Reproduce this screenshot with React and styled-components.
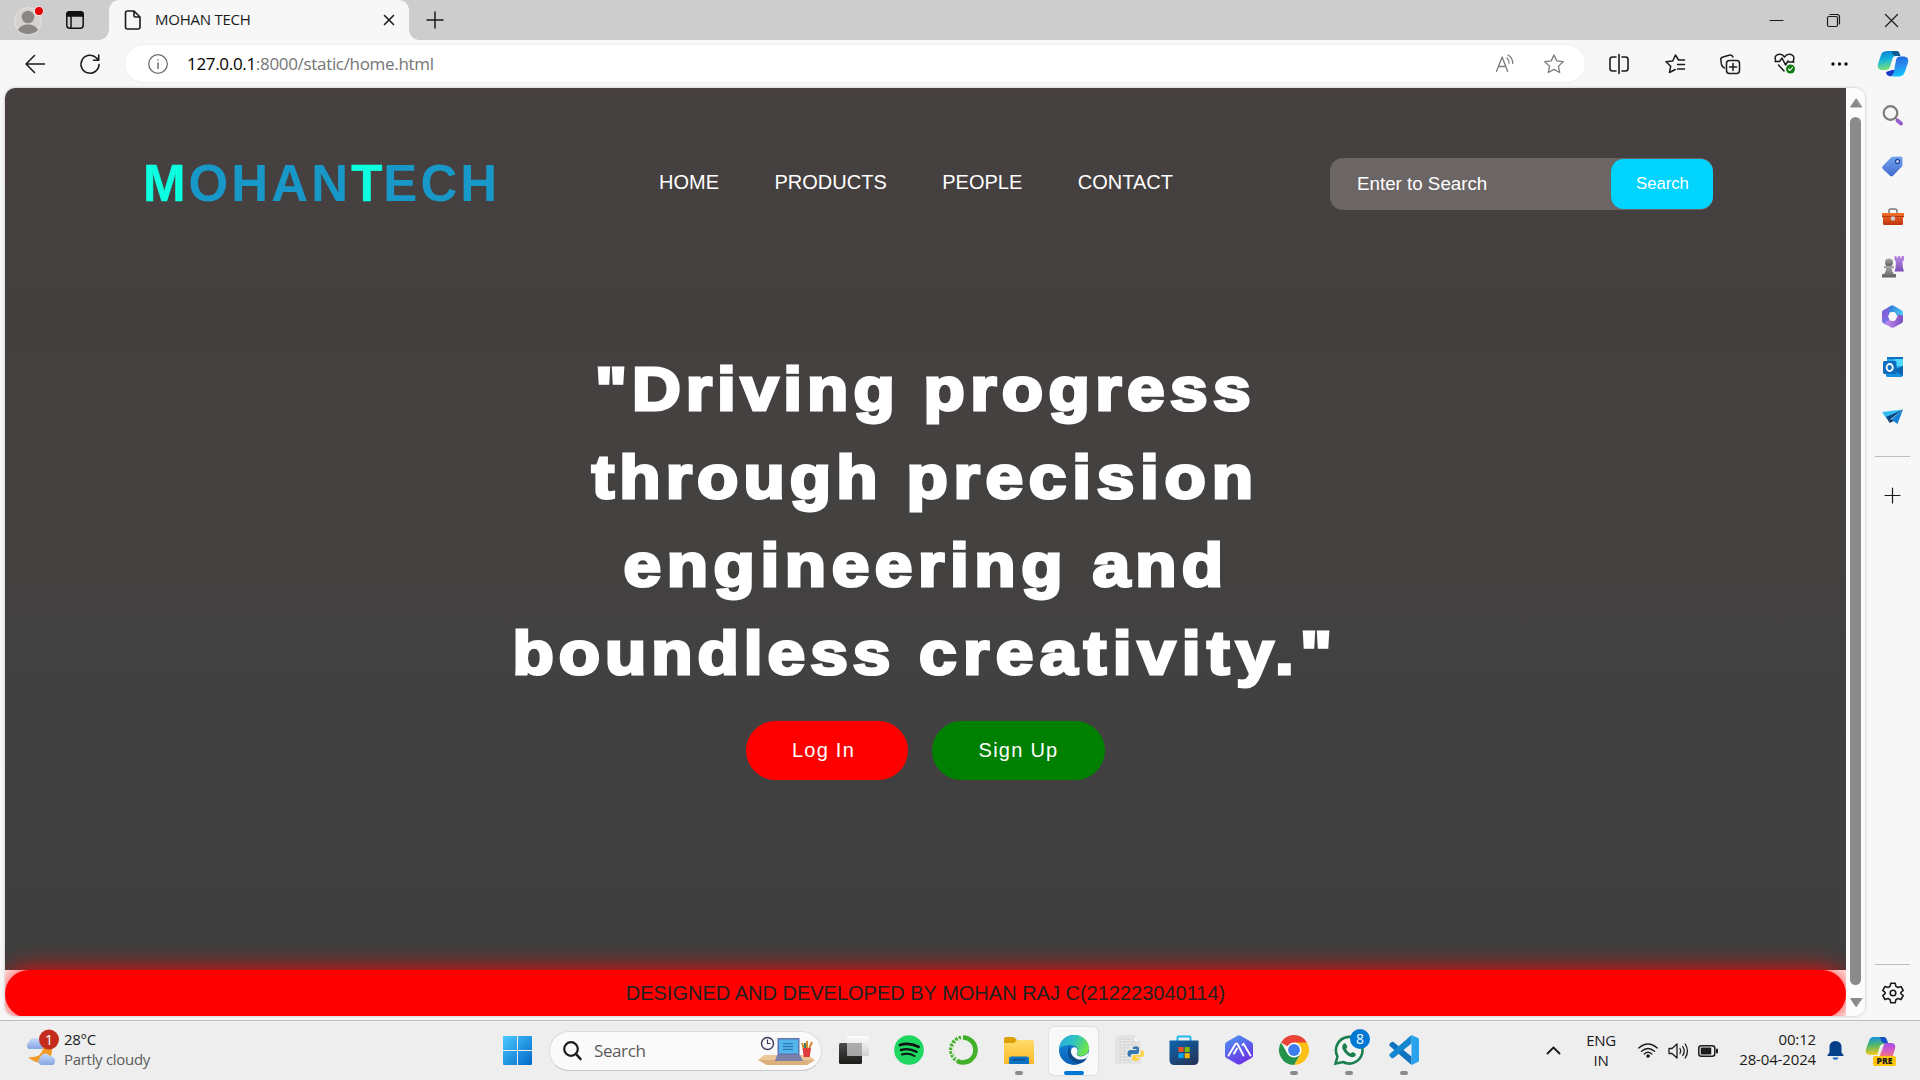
import React from "react";
import styled, { createGlobalStyle } from "styled-components";

const Global = createGlobalStyle`
  * { box-sizing: border-box; }
  body { margin: 0; overflow: hidden; background: #f7f7f7; }
  svg { display: block; overflow: visible; flex: none; }
`;

const ui = `"Open Sans", "Noto Sans", sans-serif`;
const arial = `"Liberation Sans", Arial, sans-serif`;

const Screen = styled.div`
  width: 1920px;
  height: 1080px;
  display: flex;
  flex-direction: column;
  overflow: hidden;
  background: #f7f7f7;
  font-family: ${ui};
`;

/* ---------- browser chrome ---------- */
const TitleBar = styled.div`
  height: 40px;
  display: flex;
  background: #cdcdcd;
`;
const TitleLeft = styled.div`
  width: 109px;
  display: flex;
  align-items: center;
  padding-left: 13px;
  gap: 23px;
`;
const Tab = styled.div`
  width: 300px;
  height: 40px;
  display: flex;
  align-items: center;
  padding: 0 14px 0 15px;
  background: #f7f7f7;
  border-radius: 10px 10px 0 0;
  position: relative;
  &::before, &::after {
    content: "";
    position: absolute;
    bottom: 0;
    width: 10px;
    height: 10px;
  }
  &::before { left: -10px; background: radial-gradient(circle at 0 0, transparent 9.5px, #f7f7f7 10px); }
  &::after { right: -10px; background: radial-gradient(circle at 100% 0, transparent 9.5px, #f7f7f7 10px); }
`;
const TabTitle = styled.span`
  flex: 1;
  margin-left: 13px;
  padding-bottom: 2px;
  font-size: 15px;
  letter-spacing: -0.25px;
  color: #1b1b1b;
  line-height: 20px;
  white-space: nowrap;
`;
const NewTab = styled.div`
  display: flex;
  align-items: center;
  margin-left: 17px;
`;
const WindowButtons = styled.div`
  margin-left: auto;
  display: flex;
`;
const Slot = styled.div`
  width: ${(p) => p.$w}px;
  height: ${(p) => (p.$h ? p.$h + "px" : "auto")};
  display: flex;
  align-items: center;
  justify-content: center;
  flex: none;
`;
const Toolbar = styled.div`
  height: 48px;
  display: flex;
  align-items: center;
  padding-bottom: 1px;
`;
const AddressBar = styled.div`
  width: 1460px;
  height: 37px;
  display: flex;
  align-items: center;
  padding-left: 23px;
  border-radius: 19px;
  background: #fff;
  box-shadow: 0 0 3px rgba(0, 0, 0, 0.07);
`;
const Url = styled.span`
  flex: 1;
  margin-left: 19px;
  font-size: 17px;
  letter-spacing: -0.32px;
  color: #757575;
  white-space: nowrap;
  b { font-weight: 400; color: #000; }
`;

/* ---------- body ---------- */
const Body = styled.div`
  height: 932px;
  display: flex;
  padding-left: 5px;
`;
const Viewport = styled.div`
  width: 1860px;
  height: 928px;
  display: flex;
  border-radius: 10px;
  overflow: hidden;
  background: #fff;
  box-shadow: 0 0 3px rgba(0, 0, 0, 0.25);
`;
const Page = styled.div`
  width: 1841px;
  height: 928px;
  display: flex;
  flex-direction: column;
  overflow: hidden;
  font-family: ${arial};
`;
const Main = styled.main`
  height: 882px;
  flex: none;
  display: flex;
  flex-direction: column;
  background: linear-gradient(#464140 0%, #454040 28%, #434240 50%, #424041 70%, #3e3f3e 100%);
`;
const Header = styled.header`
  height: 192px;
  display: flex;
  align-items: center;
  padding-left: 138px;
`;
const Logo = styled.h1`
  width: 516px;
  margin: 0;
  font-size: 51px;
  font-weight: 700;
  letter-spacing: 3.1px;
  line-height: 60px;
  color: #1898c8;
  span { color: #0cffe1; -webkit-text-stroke: 0.5px #0cffe1; }
  span + span { letter-spacing: 1px; }
`;
const Nav = styled.nav`
  width: 671px;
  display: flex;
  gap: 55.5px;
  padding-bottom: 4px;
`;
const NavLink = styled.a`
  font-size: 20px;
  color: #fff;
`;
const SearchBox = styled.div`
  width: 383px;
  height: 52px;
  display: flex;
  align-items: center;
  padding-left: 27px;
  border-radius: 13px;
  background: #6b6565;
`;
const Placeholder = styled.span`
  flex: 1;
  font-size: 18.75px;
  color: #fff;
`;
const SearchButton = styled.button`
  width: 102px;
  height: 50px;
  border: 0;
  padding: 0 0 0 1px;
  border-radius: 12.5px;
  background: #00d4ff;
  color: #fff;
  font: 16.67px ${arial};
`;
const Hero = styled.section`
  display: flex;
  flex-direction: column;
  align-items: center;
  padding-top: 65px;
`;
const Line = styled.div`
  height: 88px;
  line-height: 88px;
  font-size: 61.5px;
  font-weight: 700;
  color: #fff;
  white-space: pre;
  -webkit-text-stroke: 3px #fff;
  transform: scaleX(1.1);
`;
const Word = styled.span`
  letter-spacing: ${(p) => p.$ls || 4.5}px;
`;
const Actions = styled.div`
  display: flex;
  gap: 24px;
  margin-top: 24px;
`;
const Pill = styled.button`
  width: ${(p) => p.$w}px;
  height: 59px;
  border: 0;
  padding: 0 ${(p) => p.$pr || 0}px 0 0;
  border-radius: 30px;
  background: ${(p) => p.$bg};
  color: #fff;
  font: 20px ${arial};
  letter-spacing: 1.25px;
`;
const Footer = styled.footer`
  height: 48px;
  flex: none;
  display: flex;
  align-items: center;
  justify-content: center;
  padding-bottom: 2px;
  border-radius: 25px;
  background: #f00;
  box-shadow: 0 0 25px #f00;
  color: #212121;
  font-size: 20px;
  position: relative;
`;
const Scrollbar = styled.div`
  width: 19px;
  display: flex;
  flex-direction: column;
  align-items: center;
  padding-top: 10px;
  background: #fcfcfc;
`;
const Thumb = styled.div`
  width: 11px;
  height: 868px;
  margin: 9px 0 13px;
  border-radius: 6px;
  background: #8b8b8b;
`;
const Sidebar = styled.aside`
  width: 55px;
  height: 932px;
  display: flex;
  flex-direction: column;
  align-items: center;
  padding-top: 3px;
`;
const Rule = styled.div`
  width: 35px;
  height: 1px;
  background: #bcbcbc;
  flex: none;
`;
const Spacer = styled.div`
  flex: 1;
`;

/* ---------- taskbar ---------- */
const Taskbar = styled.div`
  height: 60px;
  display: flex;
  align-items: center;
  background: #eee;
  border-top: 1px solid #bdbdbd;
`;
const Weather = styled.div`
  width: 490px;
  display: flex;
  align-items: center;
  padding-left: 25px;
  gap: 5px;
  padding-bottom: 3px;
`;
const Stack = styled.div`
  width: ${(p) => (p.$w ? p.$w + "px" : "auto")};
  display: flex;
  flex-direction: column;
  align-items: ${(p) => p.$align || "flex-start"};
  padding-bottom: ${(p) => p.$pb || 0}px;
  font-size: 15px;
  line-height: 20px;
  letter-spacing: ${(p) => p.$ls || -0.3}px;
  color: #1b1b1b;
  white-space: nowrap;
`;
const Muted = styled.span`
  color: #5c5c5c;
`;
const TaskSearch = styled.div`
  width: 273px;
  height: 40px;
  margin: 0 4px;
  display: flex;
  align-items: center;
  padding: 0 6px 0 13px;
  border: 1px solid #dcdcdc;
  border-bottom-color: #c9c9c9;
  border-radius: 20px;
  background: #fafafa;
`;
const SearchText = styled.span`
  flex: 1;
  margin-left: 12px;
  padding-bottom: 1px;
  font-size: 17px;
  letter-spacing: -0.4px;
  color: #5a5a5a;
`;
const TaskApp = styled.div`
  width: 55px;
  height: 48px;
  display: flex;
  justify-content: center;
  align-items: center;
  padding-bottom: 1px;
  position: relative;
  &::before {
    content: "";
    display: ${(p) => (p.$active ? "block" : "none")};
    position: absolute;
    inset: 0 3px;
    border-radius: 5px;
    background: #f9f9f9;
    box-shadow: 0 0 2px rgba(0, 0, 0, 0.2);
  }
  &::after {
    content: "";
    display: ${(p) => (p.$active || p.$open ? "block" : "none")};
    position: absolute;
    bottom: 0;
    width: ${(p) => (p.$active ? 20 : 8)}px;
    height: 4px;
    border-radius: 2px;
    background: ${(p) => (p.$active ? "#0078d4" : "#8a8a8a")};
  }
  svg { position: relative; }
`;
const Tray = styled.div`
  margin-left: auto;
  width: 391px;
  display: flex;
  align-items: center;
`;

const Svg = ({ w = 20, h, vb, children, c = "#1b1b1b", sw = 1.4 }) => (
  <svg width={w} height={h || w} viewBox={vb || `0 0 ${w} ${h || w}`} fill="none" stroke={c} strokeWidth={sw} strokeLinecap="round" strokeLinejoin="round">
    {children}
  </svg>
);
const Grad = ({ id, a, b, x2 = 0, y2 = 1, mid }) => (
  <linearGradient id={id} x1="0" y1="0" x2={x2} y2={y2}>
    <stop offset="0" stopColor={a} />
    {mid && <stop offset="0.5" stopColor={mid} />}
    <stop offset="1" stopColor={b} />
  </linearGradient>
);

const Avatar = () => (
  <Svg w={30} h={30} c="none">
    <circle cx="15" cy="16" r="13.3" fill="#d5d2cf" stroke="#e6e4e1" strokeWidth="1" />
    <circle cx="15" cy="12" r="6.3" fill="#8b8682" />
    <path d="M5 25c3-7.500 17-7.500 20 0-5 5.500-15 5.500-20 0Z" fill="#8b8682" />
    <circle cx="26" cy="6" r="4.600" fill="#e60000" stroke="#eee" strokeWidth="1" />
  </Svg>
);
const Workspaces = () => (
  <Svg w={18} sw={1.500} c="#111">
    <rect x="0.800" y="0.800" width="16.400" height="16.400" rx="3" />
    <path d="M1 5V3q0-2 2-2h12q2 0 2 2v2Z" fill="#111" />
    <path d="M5 5v12" />
  </Svg>
);
const CopilotIcon = () => (
  <svg width="30" height="27" viewBox="0 0 30 27">
    <defs>
      <Grad id="cpa" a="#0a7bd0" mid="#15b4dc" b="#7be07a" x2={0.2} />
      <Grad id="cpb" a="#1c62dc" mid="#2b86ec" b="#0fc0fb" x2={0.2} />
    </defs>
    <path d="M14 20h5l-4 4.500c-1 1.500-2 2-4 1.500-2-.3-2.500-2-3-4Z" fill="#163cc8" />
    <path d="M10 1h8c3 0 3.500 2.500 4 5h-4c-2 0-3 1-3.600 3L12 17c-.7 2-2 3-4 3H5c-4 0-6-2-5-6L3 5c.8-3 3-4 7-4Z" fill="url(#cpa)" />
    <path d="M14 1h4.500c2.500 0 3 2 4 5h-4.300C16 6 14 5 14 1Z" fill="#0b5b95" />
    <path d="M22 6.500h3c4 0 6 2 5 6l-3 9c-1 3-3 5-7 5h-8c2 0 3-1 3.600-3L18 10c.7-2.500 2-3.500 4-3.500Z" fill="url(#cpb)" />
  </svg>
);
const ChessIcon = () => (
  <svg width="22" height="24" viewBox="0 0 22 24">
    <defs><Grad id="cha" a="#aaa" b="#606060" /><Grad id="chb" a="#b98ae8" b="#7a4fb5" /></defs>
    <path d="M12.500 1h2v1.500h1.500V1h2v1.500h1.500V1H22v4l-1.500 1.500L21 13l1 3.500h-9.500l1-3.500.4-6.500L12.500 5Z" fill="url(#chb)" />
    <circle cx="7" cy="7.500" r="4" fill="url(#cha)" />
    <path d="M2 11h10v2.200H9.700C10 16 10.500 17 12 19h2v3.500H0V19h2c1.500-2 2-3 2.300-5.800H2Z" fill="url(#cha)" />
  </svg>
);
const M365Icon = () => (
  <svg width="21" height="23" viewBox="0 0 21 23">
    <defs>
      <Grad id="ma" a="#3f5fd0" mid="#8a62dc" b="#6a7ae6" x2={0.3} />
      <Grad id="mb" a="#2f6fd6" b="#4fd0f6" x2={1} y2={0.6} />
      <Grad id="mc" a="#c58af0" b="#7b4fc0" x2={1} y2={0} />
    </defs>
    <path d="M9 .8.9 5.400Q0 6 0 7.200V16q0 1.300 1 1.900l4 2.300 2.500-5-.5-8.700Z" fill="url(#ma)" />
    <path d="M7.500 1.700 9.200.7q1.300-.8 2.600 0L20 5.400q1 .6 1 1.800v8l-6.500-1.500L14 8.500 8 7.500 6.500 10Z" fill="url(#mb)" />
    <path d="M21 10.500V16q0 1.300-1 1.900l-8.200 4.500q-1.300.8-2.600 0L4 19.500q-1-.7-.5-2.200L7 15l6 .3 3.500-5.800Z" fill="url(#mc)" />
    <path d="M8.600 7.600h4l2.200 3.900-2.200 3.900h-4l-2.200-3.900Z" fill="#f7f7f7" stroke="#f7f7f7" strokeWidth="1" strokeLinejoin="round" />
  </svg>
);
const EdgeIcon = () => (
  <svg width="30" height="30" viewBox="0 0 30 30">
    <defs>
      <Grad id="ea" a="#2aa6e0" mid="#2cc3c5" b="#6be34f" x2={1} y2={0.4} />
      <Grad id="eb" a="#148fe0" b="#0c5fb5" />
    </defs>
    <circle cx="15" cy="15" r="15" fill="url(#eb)" />
    <path d="M0 14C1 5 7 0 15 0c9 0 15 6 15 13 0 5-4 8-8 8-3 0-5-1.500-4-3 3-4-1-8-6-8C6 10 1 12 0 14Z" fill="url(#ea)" />
    <path d="M11 11c-5 6-1 17 9 17 3 0 5.500-1 7.500-4.500-3 1.500-6 1.700-8 1.200C13 23 10.500 17 11 11Z" fill="#114a8b" />
    <path d="M12.500 14c2-3.500 7-1 6 2.800-.8 2-1.300 2.700 0 3.700 2 1.500 6.500 1.200 9.500-1.500l1.500-2 .3 3-2.500 3c-4 2-8 2-11 0-4-2.500-5-6-3.800-9Z" fill="#f9f9f9" />
  </svg>
);
const ChromeIcon = () => (
  <svg width="30" height="30" viewBox="0 0 30 30">
    <path d="M15 15 2 7.500A15 15 0 0 1 28 7.500Z" fill="#ea4335" />
    <path d="M15 7.500h13A15 15 0 0 1 15 30l6.500-11.200Z" fill="#fbc116" />
    <path d="M2 7.500A15 15 0 0 0 15 30l6.500-11.200L15 21l-6.500-2.200Z" fill="#23934b" />
    <circle cx="15" cy="15" r="7.500" fill="#fff" />
    <circle cx="15" cy="15" r="5.900" fill="#3b7ded" />
  </svg>
);
const WeatherIcon = () => (
  <svg width="34" height="36" viewBox="0 0 34 36">
    <defs><Grad id="wa" a="#c9dcfa" b="#84a5e4" /></defs>
    <path d="M26 15c5 12-10 24-23 11 9 1 14-2 15-9Z" fill="#f09a28" />
    <path d="M4 18a4 4 0 0 1 0-7 6 6 0 0 1 11-1 4.500 4.500 0 0 1 2 8Z" fill="url(#wa)" />
    <path d="M16 34a4 4 0 0 1-1-7 5.500 5.500 0 0 1 10-2 5 5 0 0 1 3 9Z" fill="url(#wa)" />
    <circle cx="24" cy="8.500" r="10" fill="#c42b1c" />
    <text x="24" y="14" textAnchor="middle" fontFamily="Open Sans, sans-serif" fontSize="15" fill="#fff">1</text>
  </svg>
);
const DeskIcon = () => (
  <svg width="57" height="30" viewBox="0 0 57 30">
    <path d="M6 19h44l7 5-8 5H9l-9-5Z" fill="#edc797" />
    <path d="M0 24h57l-8 5H9Z" fill="#cfa06c" opacity=".6" />
    <circle cx="9.500" cy="7.500" r="6" fill="#f7f7fa" stroke="#3c3c58" strokeWidth="1.400" />
    <path d="M9.500 3.500v4h3" stroke="#3c3c58" strokeWidth="1.200" fill="none" />
    <rect x="19.500" y="2" width="22" height="17" fill="#6275aa" />
    <rect x="21" y="3.500" width="19" height="14" fill="#54b5ed" />
    <rect x="25" y="7" width="10" height="7" fill="#237dc4" />
    <path d="M25 9h10M25 12h10" stroke="#8bd2f6" />
    <path d="M19 19h23l3 6H17Z" fill="#7d80a8" />
    <path d="m46 13-2-6m5 6V5m2 8 3-7" stroke="#d58a31" strokeWidth="2" />
    <path d="M47 12V7" stroke="#397f67" strokeWidth="2" />
    <path d="M44.500 12H53l-1.300 9h-6Z" fill="#df3d3b" />
  </svg>
);
const PreIcon = () => (
  <svg width="30" height="30" viewBox="0 0 30 30">
    <defs><Grad id="pa" a="#108ee9" mid="#55b865" b="#f4ca25" x2={0.1} /><Grad id="pb" a="#a34de8" mid="#d65bc4" b="#fa7a62" /></defs>
    <path d="M8 1h9c3 0 4 3 5 6-3 0-4 1-5 4l-3 8H5c-4 0-6-2-5-6l3-8c1-3 2-4 5-4Z" fill="url(#pa)" />
    <path d="M14 1h4c2 0 3 3 4 6h-4c-3 0-3-4-4-6Z" fill="#1851c9" />
    <path d="M21 7h4c4 0 5 3 4 6l-3 9H13l4-10c1-3 1-5 4-5Z" fill="url(#pb)" />
    <path d="m18 8-5 12h-2l3-10q1-2 4-2Z" fill="#f4f4f6" />
    <rect x="7" y="20" width="23" height="10" rx="2" fill="#ffc50a" />
    <text x="18.500" y="28.300" textAnchor="middle" fontFamily="Open Sans, sans-serif" fontSize="8.600" fontWeight="800" fill="#1b1b1b">PRE</text>
  </svg>
);

const SideTop = [
  <Svg w={22} sw={2.200} c="#7b7b7b"><circle cx="8.500" cy="8" r="6.800" /><path d="m13.500 13 2 2" strokeWidth="1.500" /><path d="m15.500 15.500 3.500 3" stroke="#9560cd" strokeWidth="4" /></Svg>,
  <svg width="21" height="21" viewBox="0 0 21 21"><defs><Grad id="tg" a="#72a5ee" b="#4169cf" /></defs><path d="M10.500.8 18.500.5Q20.500.5 20.500 2.500V9q0 1.200-1 2L11 19.800q-1.500 1.200-3 0L.8 13q-1.200-1.500 0-3L9 1.500Q9.600.8 10.500.8Z" fill="url(#tg)" /><circle cx="15.500" cy="5.500" r="2" fill="#d8e7ff" stroke="#24459c" strokeWidth="1.300" /></svg>,
  <svg width="22" height="16" viewBox="0 0 22 16"><defs><Grad id="bx" a="#f3702a" b="#bd340d" /></defs><path d="M7 5V3q0-2 2-2h4q2 0 2 2v2" fill="none" stroke="#777" strokeWidth="1.500" /><path d="M0 5h22v4l-1 .5V16q0 1-1.500 1h-17Q1 17 1 16V9.500L0 9Z" fill="url(#bx)" /><path d="M0 8.500h22" stroke="#a92f0b" strokeWidth=".8" /><circle cx="11" cy="10.500" r="2.200" fill="#ccc" /></svg>,
  <ChessIcon />,
  <M365Icon />,
  <svg width="20" height="20" viewBox="0 0 20 20"><path d="M4 2q0-2 2-2h12q2 0 2 2v11H4Z" fill="#28a8ea" /><path d="M12 2h8v7h-8Z" fill="#50d9ff" /><path d="M4 0h16v2H4Z" fill="#0a72bd" /><path d="M3 19V11l10 2 7-4v8q0 3-2 3H4Z" fill="#1490df" /><path d="m10 13 10 6V9Z" fill="#0c65af" /><rect x="0" y="4" width="13.500" height="13" rx="1.500" fill="#0f6cbd" /><ellipse cx="6.700" cy="10.500" rx="3.100" ry="3.500" fill="none" stroke="#fff" strokeWidth="1.800" /></svg>,
  <svg width="21" height="16" viewBox="0 0 21 16"><path d="M0 3 21 .5 4 9Z" fill="#35bdf1" /><path d="M21 .5 15.500 15 9 10.500Z" fill="#1583d8" /><path d="M4 8 21 .5 8 10.500 7.500 14Z" fill="#064782" /><path d="m7.500 14 1-4 3 2Z" fill="#0b274d" /></svg>,
];

const TaskApps = [
  { icon: <svg width="30" height="28" viewBox="0 0 30 28"><defs><Grad id="tv" a="#4c4c4a" b="#1b1b19" /><Grad id="tv2" a="#fff" b="#ccc" /></defs><rect x="0" y="7" width="23" height="21" rx="1.500" fill="url(#tv)" /><rect x="8" y="0" width="22" height="20" rx="1.500" fill="url(#tv2)" opacity=".85" /><path d="M8 7h15v13H8Z" fill="#9e9e9e" opacity=".7" /></svg> },
  { icon: <Svg w={30} c="#111"><circle cx="15" cy="15" r="14.800" fill="#1ed760" stroke="none" /><path d="M6 10q9-3 18.500 1.800" strokeWidth="2.800" /><path d="M7 15q8-2.400 15.500 1.800" strokeWidth="2.400" /><path d="M8 19.500q7-2 12.500 1.500" strokeWidth="2" /></Svg> },
  { icon: <Svg w={30} c="#43b02a"><path d="M14 2.500a12.500 12.500 0 0 1 0 25q-3 0-5-1.200" strokeWidth="4.600" strokeLinecap="butt" /><path d="M10 26.500A12.500 12.500 0 0 1 12 2.600" strokeWidth="4" strokeLinecap="butt" strokeDasharray="2.500 1.200" /><path d="M8 24.500A11.500 11.500 0 0 1 11 4.500" stroke="#eee" strokeWidth="1.200" strokeDasharray="1.500 2.500" /></Svg> },
  { open: true, icon: <svg width="30" height="27" viewBox="0 0 30 27"><defs><Grad id="fe" a="#ffdc69" b="#f9b928" /></defs><path d="M0 2q0-2 2-2h7q1.500 0 2.500 1.500L13 3v5H0Z" fill="#dda006" /><path d="M0 6h10l3-3h15q2 0 2 2v22H0Z" fill="url(#fe)" /><path d="M5 27v-5q0-2.500 2.500-2.500h15Q25 19.500 25 22v5Z" fill="#0f73c4" /><path d="M8.500 22.700h13" stroke="#08508f" strokeWidth="1.500" /></svg> },
  { active: true, icon: <EdgeIcon /> },
  { icon: <svg width="30" height="30" viewBox="0 0 30 30"><path d="M2 1h18l6 6v21H2Z" fill="#e7e7e7" stroke="#dcdcdc" /><path d="M5 4h13M5 7h15M5 10h18M5 13h10M5 16h8M5 19h10M5 22h9M5 25h13" stroke="#c9c9c9" strokeWidth="1.200" strokeDasharray="3 1" /><path d="M20 1v6h6" fill="#f8f8f8" stroke="#d6d6d6" /><path d="M19 12q5-2 6 1v4q0 2-2.500 2h-4q-2 0-2 3-3 0-3-3.500t3-3.500h6v-1h-4Z" fill="#3776ab" /><path d="M27 15q3 0 3 3.500t-3 3.500h-5v1h3.500q0 3-4 3T18 23q0-3 2-3h5q2 0 2-2Z" fill="#ffd140" /></svg> },
  { icon: <svg width="30" height="30" viewBox="0 0 30 30"><defs><Grad id="st" a="#0a65b0" b="#24365d" x2={0.7} /></defs><path d="M8.500 6V2.500Q8.500 1.500 9.500 1.500h11q1 0 1 1V6" fill="none" stroke="#24b9ef" strokeWidth="2" /><path d="M.5 5.500h29V25q0 5-5 5h-19q-5 0-5-5Z" fill="url(#st)" /><path d="M9.500 12h5v5h-5Z" fill="#f25022" /><path d="M15.700 12h5v5h-5Z" fill="#7fba00" /><path d="M9.500 18.200h5v5h-5Z" fill="#00a4ef" /><path d="M15.700 18.200h5v5h-5Z" fill="#ffb900" /></svg> },
  { icon: <svg width="30" height="30" viewBox="0 0 30 30"><defs><Grad id="hx" a="#4b9bf2" b="#6a34e6" x2={0.5} /></defs><path d="M15 .3q1 0 2 .6l10.500 6q1.500 1 1.500 2.600v11q0 1.600-1.500 2.600l-10.500 6q-2 1-4 0L2.500 23Q1 22 1 20.500v-11Q1 8 2.500 7L13 .9q1-.6 2-.6Z" fill="url(#hx)" /><path d="m4.500 20.500 7-11.500q1-1.200 2 0l6 11.500M10 18.500l3-5M18.500 10l1-1.200 7 11.700" fill="none" stroke="#fff" strokeWidth="1.900" strokeLinecap="round" strokeLinejoin="round" /></svg> },
  { open: true, icon: <ChromeIcon /> },
  { open: true, icon: <svg width="30" height="30" viewBox="0 0 30 30"><path d="m1.500 28.500 2-7A13.300 13.300 0 1 1 9 27Z" fill="#f3f5f4" stroke="#1b7f50" strokeWidth="2.600" /><path d="M9 9.500q1.500-2 3-.5l1.500 3-1.500 2q1.500 3 4.500 4.500l2-1.500 3 1.500q1 1.500-.7 3-3 2-7-1t-5.500-7Q8 11 9 9.500Z" fill="#1b7f50" /><circle cx="26" cy="4" r="10" fill="#0078d4" /><text x="26" y="9" textAnchor="middle" fontFamily="Open Sans, sans-serif" fontSize="14" fill="#fff">8</text></svg> },
  { open: true, icon: <svg width="30" height="30" viewBox="0 0 30 30"><path d="M22.500 0 29 3q1 .5 1 1.500v21q0 1-1 1.500l-6.500 3Z" fill="#2aa3ee" /><path d="M.5 9 2.500 7q1-.6 2 0L22.500 21.500V30L.7 11Q0 10 .5 9Z" fill="#0f73bd" /><path d="M.5 21l2 2q1 .6 2 0L22.500 8.500V0L.7 19Q0 20 .5 21Z" fill="#1286d0" /></svg> },
];

export default function App() {
  return (
    <Screen>
      <Global />
      <TitleBar>
        <TitleLeft><Avatar /><Workspaces /></TitleLeft>
        <Tab>
          <Svg w={18} h={20} sw={1.600}><path d="M1.500 3q0-2 2-2H10l6 6v10q0 2-2 2H3.500q-2 0-2-2ZM10 1v4.500Q10 7 11.500 7H16" /></Svg>
          <TabTitle>MOHAN TECH</TabTitle>
          <Svg w={12} sw={1.600}><path d="m1.500 1.500 9 9m0-9-9 9" /></Svg>
        </Tab>
        <NewTab><Svg w={18} sw={1.500}><path d="M9 1v16M1 9h16" /></Svg></NewTab>
        <WindowButtons>
          <Slot $w={56}><Svg w={13} sw={1.200}><path d="M0 6.500h13" /></Svg></Slot>
          <Slot $w={58}><Svg w={13} sw={1.200}><rect x=".5" y="2.500" width="10" height="10" rx="1.500" /><path d="M3 .5h7q2.500 0 2.500 2.500v7" /></Svg></Slot>
          <Slot $w={58}><Svg w={13} sw={1.200}><path d="m.5.5 12 12m0-12-12 12" /></Svg></Slot>
        </WindowButtons>
      </TitleBar>
      <Toolbar>
        <Slot $w={70}><Svg w={20} sw={1.500}><path d="M19.500 10H1m8.500-8.500L1 10l8.500 8.500" /></Svg></Slot>
        <Slot $w={40}><Svg w={20} sw={1.600}><path d="M19 10.500A9 9 0 1 1 16.500 4L18.500 6M18.700 1v5.200h-5.200" /></Svg></Slot>
        <Slot $w={15} />
        <AddressBar>
          <Svg w={20} c="#6f6f6f" sw={1.300}><circle cx="10" cy="10" r="9.300" /><path d="M10 9v5.500M10 6v.1" strokeWidth="1.500" /></Svg>
          <Url><b>127.0.0.1</b>:8000/static/home.html</Url>
          <Slot $w={49}><Svg w={20} c="#7b7b7b" sw={1.300}><path d="m1.500 17.500 5.600-14.500 5.600 14.500M3.500 12.500h7.200M12 4q2.200 2 2 5M13 1q5 3 4.700 8.500" /></Svg></Slot>
          <Slot $w={49}><Svg w={20} c="#7b7b7b" sw={1.300}><path d="m10 1 2.800 5.900 6.400.8-4.700 4.400 1.200 6.400L10 15.400l-5.700 3.100 1.200-6.400L.8 7.700l6.400-.8Z" /></Svg></Slot>
          <Slot $w={7} />
        </AddressBar>
        <Slot $w={6} />
        <Slot $w={56}><Svg w={20} sw={1.600}><path d="M7 3H3.500Q1 3 1 5.500v9Q1 17 3.500 17H7M13 3h3.500Q19 3 19 5.500v9q0 2.500-2.500 2.500H13M10 .5v19" /></Svg></Slot>
        <Slot $w={55}><Svg w={20} sw={1.500}><path d="M19.500 6h-6l-3-5-2.800 6L1 7.800l4.700 4.400-1.200 6.300 5.700-3M12.500 10.500h7M12.500 15h7" /></Svg></Slot>
        <Slot $w={55}><Svg w={20} sw={1.500}><rect x="6.500" y="6.500" width="13" height="13" rx="3" /><path d="M13 9.500v7M9.500 13h7M4.500 14Q2 13 1.500 10.500L.8 6Q.5 3.500 3 3L9 1.200Q12 .3 13 3" /></Svg></Slot>
        <Slot $w={55}><Svg w={21} sw={1.500}><path d="M2 8.500Q-.5 3 4 1.500 8 .3 10.500 4 13 .3 17 1.500 21.500 3 19 8.500M1 8.500h4.500L8 5l3.500 7 2.500-4 1 1h5M4.500 12l5.500 6" /><circle cx="16.500" cy="16" r="4.500" fill="#107c10" stroke="none" /><path d="m14.500 16 1.500 1.500 2.500-3" stroke="#fff" strokeWidth="1.100" /></Svg></Slot>
        <Slot $w={55}><Svg w={17} h={4} c="none"><circle cx="2" cy="2" r="1.700" fill="#111" /><circle cx="8.500" cy="2" r="1.700" fill="#111" /><circle cx="15" cy="2" r="1.700" fill="#111" /></Svg></Slot>
        <Slot $w={52}><CopilotIcon /></Slot>
      </Toolbar>
      <Body>
        <Viewport>
          <Page>
            <Main>
              <Header>
                <Logo><span>M</span>OHAN<span>T</span>ECH</Logo>
                <Nav>
                  <NavLink>HOME</NavLink><NavLink>PRODUCTS</NavLink><NavLink>PEOPLE</NavLink><NavLink>CONTACT</NavLink>
                </Nav>
                <SearchBox>
                  <Placeholder>Enter to Search</Placeholder>
                  <SearchButton>Search</SearchButton>
                </SearchBox>
              </Header>
              <Hero>
                <Line><Word>"Driving </Word><Word $ls={4.9}>progress</Word></Line>
                <Line><Word $ls={4.6}>through </Word><Word $ls={5.2}>precision</Word></Line>
                <Line><Word $ls={5.05}>engineering </Word><Word $ls={4.7}>and</Word></Line>
                <Line><Word $ls={4.5}>boundless </Word><Word $ls={5.8}>creativity."</Word></Line>
                <Actions>
                  <Pill $w={162} $pr={7} $bg="#ff0000">Log In</Pill>
                  <Pill $w={173} $bg="#008000">Sign Up</Pill>
                </Actions>
              </Hero>
            </Main>
            <Footer>DESIGNED AND DEVELOPED BY MOHAN RAJ C(212223040114)</Footer>
          </Page>
          <Scrollbar>
            <Svg w={12} h={10} c="#8b8b8b" sw={1}><path d="M6 1 .5 9h11Z" fill="#8b8b8b" /></Svg>
            <Thumb />
            <Svg w={12} h={9} c="#8b8b8b" sw={1}><path d="M6 8.500.5.5h11Z" fill="#8b8b8b" /></Svg>
          </Scrollbar>
        </Viewport>
        <Sidebar>
          {SideTop.map((icon, i) => <Slot key={i} $w={55} $h={50.2}>{icon}</Slot>)}
          <Slot $w={55} $h={14} />
          <Rule />
          <Slot $w={53} $h={76}><Svg w={15} sw={1.200}><path d="M7.500 0v15M0 7.500h15" /></Svg></Slot>
          <Spacer />
          <Rule />
          <Slot $w={55} $h={55}><Svg w={22} sw={1.600}><path d="M8.800 1.200h4.400l.7 3.200 2 1.100 3.100-1 2.200 3.800L18.800 10.500v1l2.400 2.200-2.200 3.800-3.100-1-2 1.100-.7 3.200H8.800l-.7-3.200-2-1.100-3.100 1-2.200-3.800 2.400-2.200v-1L.8 8.300 3 4.500l3.100 1 2-1.100Z" /><circle cx="11" cy="11" r="2.800" /></Svg></Slot>
        </Sidebar>
      </Body>
      <Taskbar>
        <Weather>
          <WeatherIcon />
          <Stack $pb={1}><span>28°C</span><Muted>Partly cloudy</Muted></Stack>
        </Weather>
        <TaskApp><svg width="29" height="29" viewBox="0 0 29 29"><defs><Grad id="win" a="#4cc9ff" b="#0068c8" x2={1} /></defs><path d="M1 0h13v14H0V1q0-1 1-1ZM15 0h13q1 0 1 1v13H15ZM0 15h14v14H1q-1 0-1-1ZM15 15h14v13q0 1-1 1H15Z" fill="url(#win)" /></svg></TaskApp>
        <TaskSearch>
          <Svg w={19} sw={2.200}><circle cx="8" cy="8" r="6.800" /><path d="m13 13 4.500 5" strokeWidth="2.600" /></Svg>
          <SearchText>Search</SearchText>
          <DeskIcon />
        </TaskSearch>
        {TaskApps.map((a, i) => <TaskApp key={i} $active={a.active} $open={a.open}>{a.icon}</TaskApp>)}
        <Tray>
          <Slot $w={48}><Svg w={13} h={7} sw={1.800}><path d="M.5 6.500l6-6 6 6" /></Svg></Slot>
          <Stack $w={48} $align="center" $pb={2}><span>ENG</span><span>IN</span></Stack>
          <Slot $w={8} />
          <Slot $w={30}><Svg w={20} h={15} sw={1.400}><path d="M.8 5Q10-3 19.200 5M3.500 8.200q6.500-5.600 13 0M6.200 11q3.800-3.300 7.600 0" /><circle cx="10" cy="13" r="1.500" fill="#1b1b1b" strokeWidth=".5" /></Svg></Slot>
          <Slot $w={30}><Svg w={20} h={16} sw={1.300}><path d="M1 5.500h3L9 1v14l-5-4.500H1ZM12 5.500q1.500 2.500 0 5M14.700 3.500q3 4.500 0 9M17.200 1q4.500 7 0 14" /></Svg></Slot>
          <Slot $w={30}><Svg w={20} h={12} sw={1.500}><rect x=".8" y=".8" width="16" height="10.400" rx="2.500" /><rect x="3.500" y="3.300" width="9" height="5.400" fill="#1b1b1b" /><path d="M19 4.500v3" strokeWidth="2" /></Svg></Slot>
          <Stack $w={93} $align="flex-end" $ls={-0.15} $pb={4}><span>00:12</span><span>28-04-2024</span></Stack>
          <Slot $w={4} />
          <Slot $w={30}><svg width="17" height="19" viewBox="0 0 17 19"><path d="M8.500 0q6 0 6 6.500v5l2 2.500q.5 1-.5 1H1q-1 0-.5-1l2-2.500v-5Q2.500 0 8.500 0Z" fill="#053f87" /><path d="M5.500 16.500h6q-.5 2.300-3 2.300t-3-2.300Z" fill="#0d67c2" /></svg></Slot>
          <Slot $w={61}><PreIcon /></Slot>
        </Tray>
      </Taskbar>
    </Screen>
  );
}
